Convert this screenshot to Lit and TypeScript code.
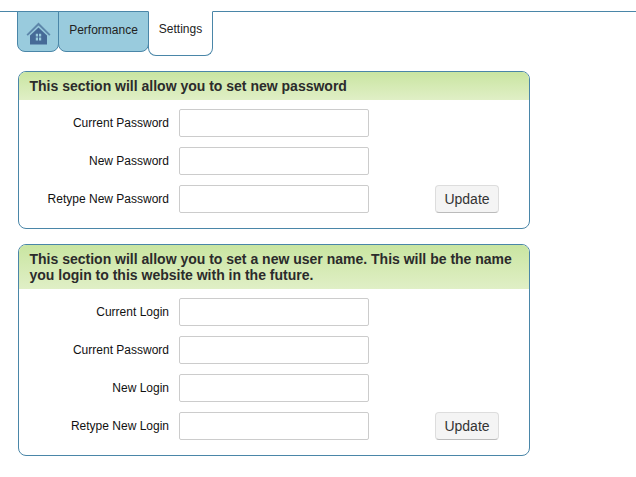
import { LitElement, html, css, svg } from 'lit';
import { customElement } from 'lit/decorators.js';

const homeIcon = svg`
  <path d="M12.5 0.5 L0.5 12.5 L1.8 13.8 L12.5 3.4 L23.2 13.8 L24.5 12.5 Z" fill="#5d86aa"/>
  <path d="M4 13.5 L12.5 5.4 L21 13.5 V22.5 H4 Z M9.8 11.8 V14.6 H12 V11.8 Z M13 11.8 V14.6 H15.2 V11.8 Z M9.8 15.6 V18.4 H12 V15.6 Z M13 15.6 V18.4 H15.2 V15.6 Z" fill="#466a97" fill-rule="evenodd"/>
`;

@customElement('app-root')
export class AppRoot extends LitElement {
  static styles = css`
    :host {
      display: block;
      height: 477px;
      overflow: hidden;
      background: #fff;
      font-family: 'Liberation Sans', Arial, sans-serif;
      font-size: 12px;
      color: #222;
    }
    .tabs {
      display: flex;
      margin-top: 11px;
      height: 40px;
      padding-left: 17px;
      border-top: 1px solid #4a86a8;
    }
    .tab {
      box-sizing: border-box;
      height: 41px;
      margin-top: -1px;
      border: 1px solid #4a86a8;
      border-radius: 0 0 8px 8px;
      background: #99cbdd;
      display: flex;
      align-items: center;
      justify-content: center;
      color: #222;
    }
    .home { width: 42px; padding-top: 3px; }
    .perf { width: 91px; margin-left: -1px; padding-bottom: 3px; }
    .settings {
      width: 65px;
      height: 45px;
      margin-left: -1px;
      background: #fff;
      border-top-color: #fff;
      padding-bottom: 9px;
    }
    .content {
      display: flex;
      flex-direction: column;
      gap: 15px;
      width: 512px;
      margin: 19px 0 0 18px;
    }
    .panel {
      border: 1px solid #4a86a8;
      border-radius: 8px;
      overflow: hidden;
      padding-bottom: 15px;
    }
    .head {
      background: linear-gradient(#c9e5a1, #e0efc6);
      font-size: 14px;
      font-weight: bold;
      line-height: 16px;
      padding: 6px 10px 6px 10.5px;
      color: #2b2b2b;
    }
    .rows {
      display: flex;
      flex-direction: column;
      gap: 10px;
      padding-top: 9px;
    }
    .row {
      display: flex;
      align-items: center;
      height: 28px;
    }
    .row label {
      width: 150px;
      text-align: right;
      margin-right: 10px;
      color: #111;
    }
    .input {
      box-sizing: border-box;
      width: 190px;
      height: 28px;
      border: 1px solid #ccc;
      border-radius: 2px;
      background: #fff;
      padding: 0;
      margin: 0;
      outline: none;
    }
    button {
      box-sizing: border-box;
      width: 64px;
      height: 28px;
      margin-left: 66px;
      padding: 0;
      border: 1px solid #ddd;
      border-bottom-color: #bbb;
      border-radius: 4px;
      background: #f4f4f4;
      font: 14px 'Liberation Sans', Arial, sans-serif;
      color: #333;
    }
  `;

  renderRow(label: string, withButton = false) {
    return html`
      <div class="row">
        <label>${label}</label>
        <input class="input" type="text" />
        ${withButton ? html`<button>Update</button>` : ''}
      </div>
    `;
  }

  renderPanel(title: string, labels: string[]) {
    return html`
      <section class="panel">
        <div class="head">${title}</div>
        <div class="rows">
          ${labels.map((label, i) => this.renderRow(label, i === labels.length - 1))}
        </div>
      </section>
    `;
  }

  render() {
    return html`
      <nav class="tabs">
        <div class="tab home">
          <svg width="25" height="23" viewBox="0 0 25 23">${homeIcon}</svg>
        </div>
        <div class="tab perf">Performance</div>
        <div class="tab settings">Settings</div>
      </nav>
      <div class="content">
        ${this.renderPanel('This section will allow you to set new password', [
          'Current Password',
          'New Password',
          'Retype New Password',
        ])}
        ${this.renderPanel(
          'This section will allow you to set a new user name. This will be the name you login to this website with in the future.',
          ['Current Login', 'Current Password', 'New Login', 'Retype New Login']
        )}
      </div>
    `;
  }
}
